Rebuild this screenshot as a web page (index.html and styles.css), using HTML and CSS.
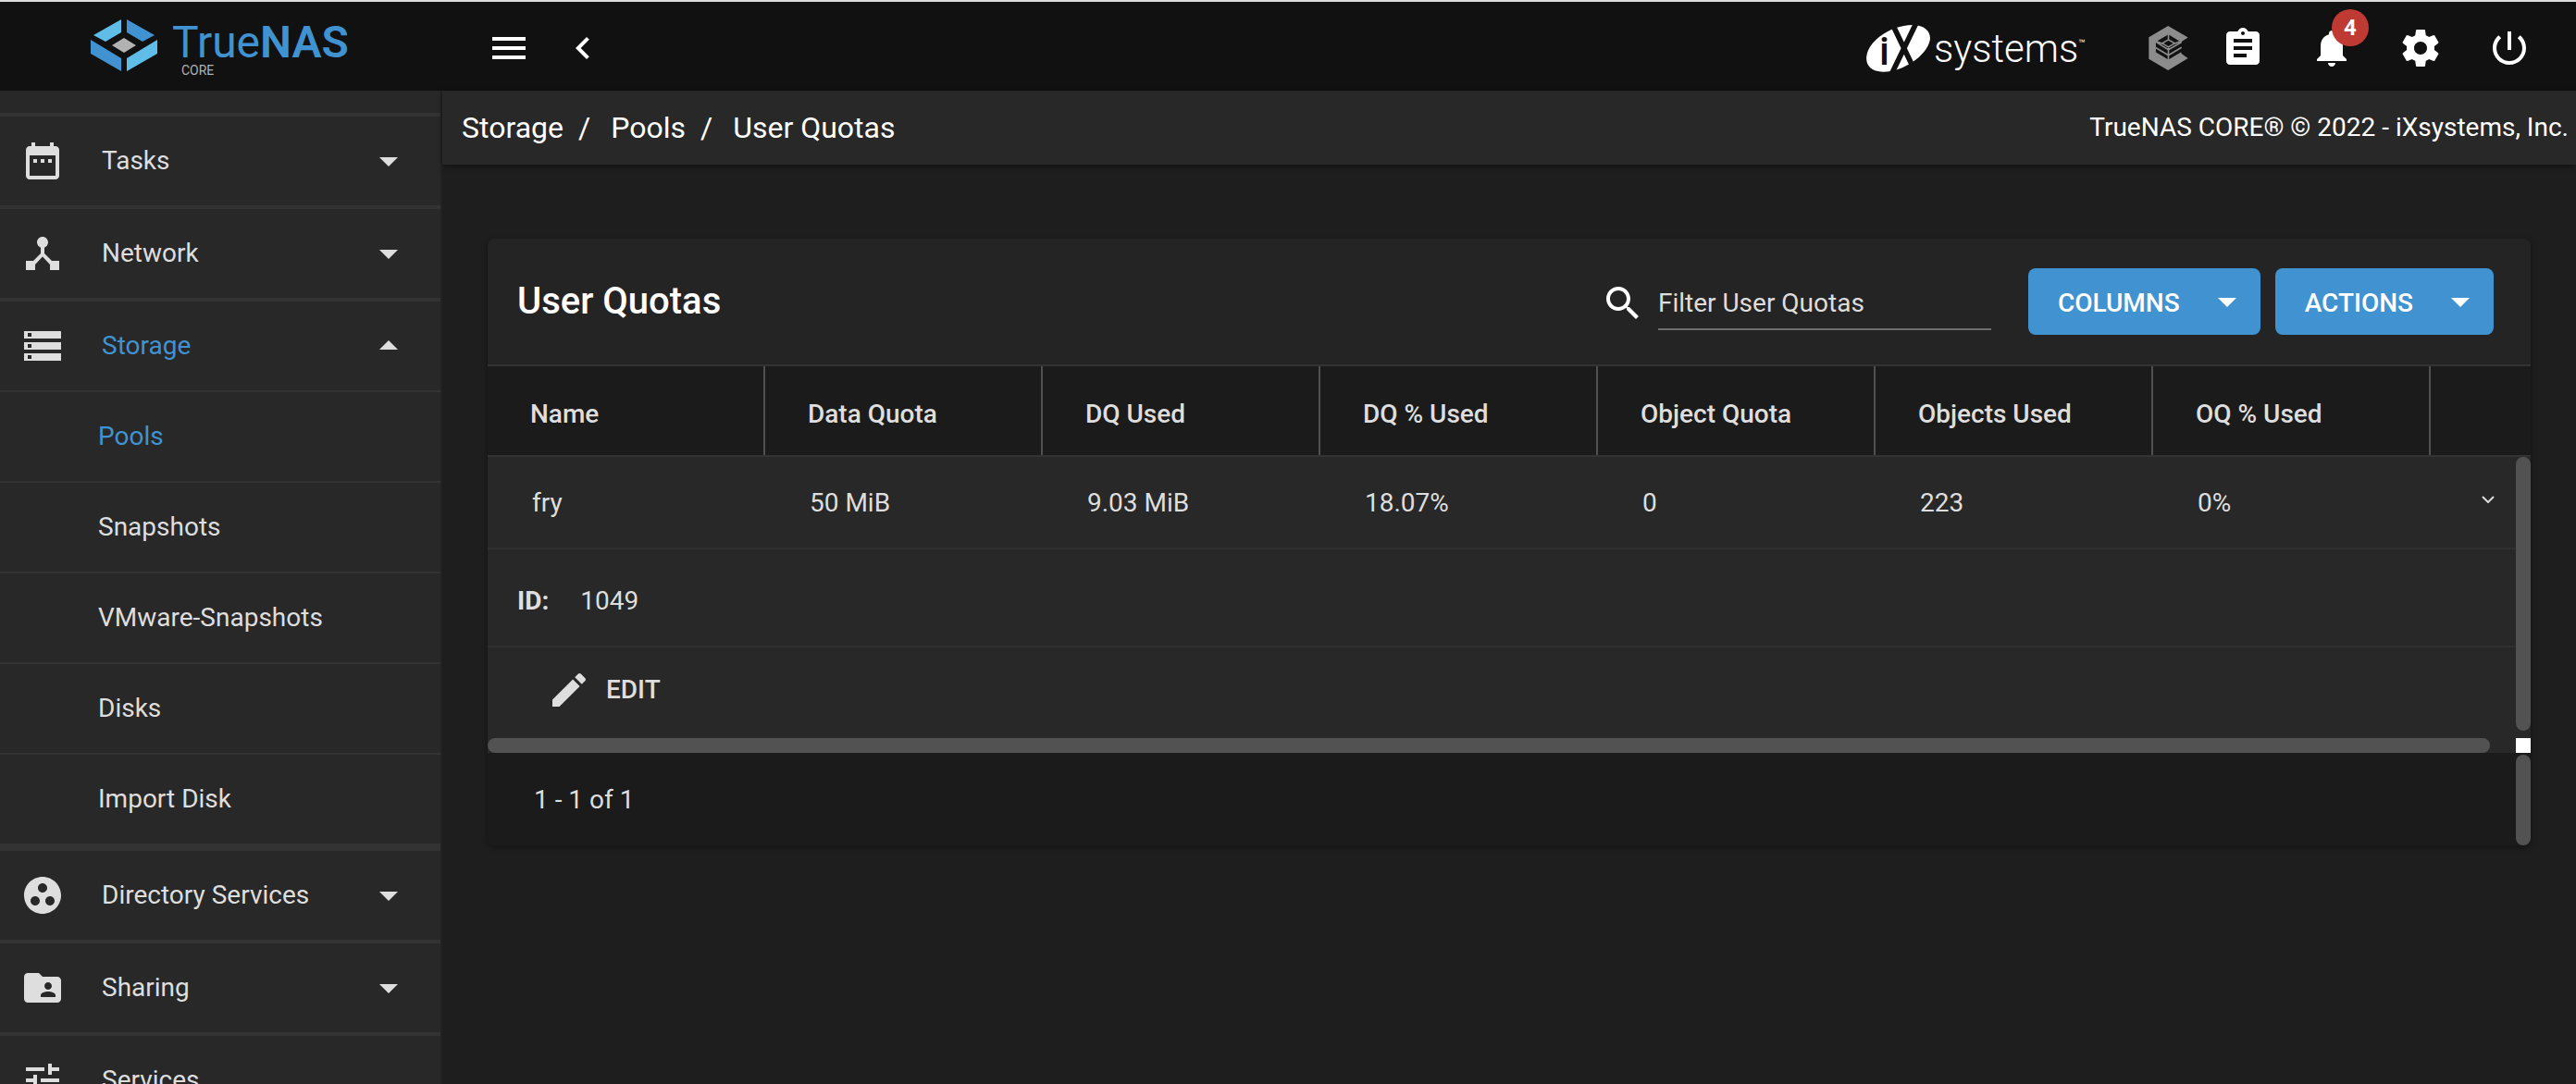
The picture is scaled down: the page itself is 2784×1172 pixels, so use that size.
FILE: index.html
```html
<!DOCTYPE html>
<html lang="en">
<head>
<meta charset="utf-8">
<title>TrueNAS - User Quotas</title>
<link rel="stylesheet" href="styles.css">
</head>
<body>
<svg class="defs" aria-hidden="true">
  <symbol id="caret-down" viewBox="0 0 24 24"><path d="M7 10l5 5 5-5z"/></symbol>
  <symbol id="caret-up" viewBox="0 0 24 24"><path d="M7 14l5-5 5 5z"/></symbol>
</svg>
<div class="app">
  <header class="topbar">
    <a class="brand" href="#" aria-label="TrueNAS CORE">
      <svg class="brand-mark" viewBox="0 0 72 58">
        <path fill="#5fbde8" d="M33 1v14L16 25 3 18zM72 23L39 43v14l33-19z"/>
        <path fill="#4093d0" d="M39 1l30 17-13 7-17-10zM0 23l33 20v14L0 38z"/>
        <path fill="#b2b2b2" d="M36 21l13 8-13 8-13-8z"/>
      </svg>
      <span class="brand-text">
        <span class="brand-name">True<b>NAS</b></span>
        <span class="brand-edition">CORE</span>
      </span>
    </a>
    <div class="toolbar">
      <button class="icon-btn" aria-label="Toggle menu"><svg viewBox="0 0 24 24"><path d="M3 18h18v-2H3v2zm0-5h18v-2H3v2zm0-7v2h18V6H3z"/></svg></button>
      <button class="icon-btn" aria-label="Collapse"><svg viewBox="0 0 24 24"><path d="M15.41 7.41L14 6l-6 6 6 6 1.41-1.41L10.83 12z"/></svg></button>
      <a class="vendor" href="#" aria-label="iXsystems">
        <svg class="vendor-mark" viewBox="51 57 207 153">
          <path fill="#fff" d="M200 57C246 57 262 84 257 108 245 158 170 210 104 209 58 208 45 178 54 148 68 100 138 57 200 57z"/>
          <path stroke="#111" stroke-width="17" fill="none" d="M136 55l66 138M213 50l-80 166"/>
          <text x="93" y="187" class="vendor-i">i</text>
        </svg>
        <span class="vendor-name">systems</span><span class="vendor-tm">™</span>
      </a>
      <button class="icon-btn command" aria-label="TrueCommand"><svg viewBox="66 68 130 145"><path fill="#8c8c8c" d="M130 68l65 38-23 15-41-25-41 24v43l41 25 41-25v-5l23 16-65 39-63-37v-71z"/><path fill="none" stroke="#8c8c8c" stroke-width="5" d="M131 92v24M131 140v50M131 113l20 12-20 12-20-12zM88 119l43 27 43-25M88 138l43 26 43-26M112 126l-22-8M150 126l22-8"/><path fill="none" stroke="#8c8c8c" stroke-width="9" d="M88 158l43 26 43-26"/></svg></button>
      <div class="actions">
        <button class="icon-btn" aria-label="Task manager"><svg viewBox="0 0 24 24"><path d="M19 3h-4.180C14.400 1.840 13.300 1 12 1c-1.300 0-2.400.840-2.820 2H5c-1.100 0-2 .9-2 2v14c0 1.100.9 2 2 2h14c1.100 0 2-.9 2-2V5c0-1.100-.9-2-2-2zm-7 0c.55 0 1 .45 1 1s-.45 1-1 1-1-.45-1-1 .45-1 1-1zm2 14H7v-2h7v2zm3-4H7v-2h10v2zm0-4H7V7h10v2z"/></svg></button>
        <button class="icon-btn" aria-label="Alerts"><svg viewBox="0 0 24 24"><path d="M12 22c1.100 0 2-.9 2-2h-4c0 1.100.890 2 2 2zm6-6v-5c0-3.070-1.640-5.640-4.500-6.320V4c0-.830-.670-1.500-1.500-1.500s-1.500.670-1.500 1.500v.680C7.630 5.360 6 7.920 6 11v5l-2 2v1h16v-1l-2-2z"/></svg><span class="badge">4</span></button>
        <button class="icon-btn" aria-label="Settings"><svg viewBox="0 0 24 24"><path d="M19.430 12.980c.04-.32.070-.64.070-.98s-.03-.66-.07-.98l2.110-1.650c.19-.15.24-.42.12-.64l-2-3.460c-.12-.22-.39-.3-.61-.22l-2.490 1c-.52-.4-1.080-.73-1.690-.98l-.38-2.650C14.460 2.180 14.250 2 14 2h-4c-.25 0-.46.18-.49.42l-.38 2.650c-.61.25-1.170.590-1.690.98l-2.490-1c-.23-.09-.49 0-.61.22l-2 3.460c-.13.22-.07.49.12.64l2.110 1.650c-.04.32-.07.650-.07.98s.03.66.07.98l-2.110 1.650c-.19.15-.24.42-.12.64l2 3.460c.12.22.39.3.61.22l2.490-1c.52.4 1.080.73 1.690.98l.38 2.650c.03.24.24.42.49.42h4c.25 0 .46-.18.49-.42l.38-2.650c.61-.25 1.170-.59 1.690-.98l2.490 1c.23.09.49 0 .61-.22l2-3.460c.12-.22.070-.49-.12-.64l-2.110-1.650zM12 15.500c-1.930 0-3.500-1.570-3.500-3.500s1.570-3.500 3.500-3.500 3.500 1.570 3.500 3.500-1.570 3.500-3.500 3.500z"/></svg></button>
        <button class="icon-btn" aria-label="Power"><svg viewBox="0 0 24 24"><path d="M13 3h-2v10h2V3zm4.830 2.170l-1.420 1.420C17.990 7.860 19 9.810 19 12c0 3.870-3.130 7-7 7s-7-3.130-7-7c0-2.190 1.010-4.140 2.580-5.420L6.170 5.170C4.230 6.820 3 9.260 3 12c0 4.970 4.030 9 9 9s9-4.030 9-9c0-2.740-1.230-5.180-3.170-6.830z"/></svg></button>
      </div>
    </div>
  </header>

  <nav class="sidebar">
    <button class="nav-item">
      <svg viewBox="0 0 24 24"><path d="M9 11H7v2h2v-2zm4 0h-2v2h2v-2zm4 0h-2v2h2v-2zm2-7h-1V2h-2v2H8V2H6v2H5c-1.110 0-1.990.9-1.990 2L3 20c0 1.100.890 2 2 2h14c1.100 0 2-.9 2-2V6c0-1.100-.9-2-2-2zm0 16H5V9h14v11z"/></svg>
      <span>Tasks</span><svg><use href="#caret-down"/></svg>
    </button>
    <button class="nav-item">
      <svg viewBox="0 0 24 24"><path d="M17 16l-4-4V8.820C14.160 8.400 15 7.300 15 6c0-1.660-1.340-3-3-3S9 4.340 9 6c0 1.300.840 2.400 2 2.820V12l-4 4H3v5h5v-3.050l4-4.200 4 4.200V21h5v-5h-4z"/></svg>
      <span>Network</span><svg><use href="#caret-down"/></svg>
    </button>
    <button class="nav-item open">
      <svg viewBox="0 0 24 24"><path d="M2 20h20v-4H2v4zm2-3h2v2H4v-2zM2 4v4h20V4H2zm4 3H4V5h2v2zm-4 7h20v-4H2v4zm2-3h2v2H4v-2z"/></svg>
      <span>Storage</span><svg><use href="#caret-up"/></svg>
    </button>
    <div class="sub">
      <a class="current" href="#">Pools</a>
      <a href="#">Snapshots</a>
      <a href="#">VMware-Snapshots</a>
      <a href="#">Disks</a>
      <a href="#">Import Disk</a>
    </div>
    <button class="nav-item">
      <svg viewBox="0 0 24 24"><path d="M12 2C6.480 2 2 6.480 2 12s4.480 10 10 10 10-4.480 10-10S17.520 2 12 2zM8 17.500c-1.380 0-2.500-1.120-2.500-2.500s1.120-2.500 2.500-2.500 2.500 1.120 2.500 2.500-1.120 2.500-2.500 2.500zM9.500 8c0-1.380 1.120-2.500 2.500-2.500s2.500 1.120 2.500 2.500-1.120 2.500-2.500 2.500S9.500 9.380 9.500 8zm6.500 9.500c-1.380 0-2.500-1.120-2.500-2.500s1.120-2.500 2.500-2.500 2.500 1.120 2.500 2.500-1.120 2.500-2.500 2.500z"/></svg>
      <span>Directory Services</span><svg><use href="#caret-down"/></svg>
    </button>
    <button class="nav-item">
      <svg viewBox="0 0 24 24"><path d="M20 6h-8l-2-2H4c-1.100 0-1.990.9-1.990 2L2 18c0 1.100.9 2 2 2h16c1.100 0 2-.9 2-2V8c0-1.100-.9-2-2-2zm-5 3c1.100 0 2 .9 2 2s-.9 2-2 2-2-.9-2-2 .9-2 2-2zm4 8h-8v-1c0-1.330 2.670-2 4-2s4 .670 4 2v1z"/></svg>
      <span>Sharing</span><svg><use href="#caret-down"/></svg>
    </button>
    <button class="nav-item">
      <svg viewBox="0 0 24 24"><path d="M3 17v2h6v-2H3zM3 5v2h10V5H3zm10 16v-2h8v-2h-8v-2h-2v6h2zM7 9v2H3v2h4v2h2V9H7zm14 4v-2H11v2h10zm-6-4h2V7h4V5h-4V3h-2v6z"/></svg>
      <span>Services</span>
    </button>
  </nav>

  <main class="main">
    <div class="crumbs">
      <div class="trail">
        <a href="#">Storage</a><i>/</i><a href="#">Pools</a><i>/</i><a href="#">User Quotas</a>
      </div>
      <span class="copyright">TrueNAS CORE® © 2022 - iXsystems, Inc.</span>
    </div>

    <section class="card">
      <div class="card-head">
        <h1>User Quotas</h1>
        <label class="filter">
          <svg viewBox="0 0 24 24"><path d="M15.500 14h-.79l-.28-.27C15.410 12.590 16 11.110 16 9.500 16 5.910 13.090 3 9.500 3S3 5.910 3 9.500 5.910 16 9.500 16c1.610 0 3.090-.59 4.230-1.570l.27.28v.79l5 4.990L20.490 19l-4.990-5zm-6 0C7.010 14 5 11.990 5 9.500S7.010 5 9.500 5 14 7.010 14 9.500 11.990 14 9.500 14z"/></svg>
          <input type="text" placeholder="Filter User Quotas" aria-label="Filter User Quotas">
        </label>
        <button class="btn"><span>COLUMNS</span><svg><use href="#caret-down"/></svg></button>
        <button class="btn"><span>ACTIONS</span><svg><use href="#caret-down"/></svg></button>
      </div>

      <div class="grid">
        <table>
          <colgroup><col class="c"><col class="c"><col class="c"><col class="c"><col class="c"><col class="c"><col class="c"><col></colgroup>
          <thead>
            <tr><th>Name</th><th>Data Quota</th><th>DQ Used</th><th>DQ % Used</th><th>Object Quota</th><th>Objects Used</th><th>OQ % Used</th><th></th></tr>
          </thead>
          <tbody>
            <tr><td>fry</td><td>50 MiB</td><td>9.03 MiB</td><td>18.07%</td><td>0</td><td>223</td><td>0%</td>
              <td class="expand"><button aria-label="Collapse row"><svg viewBox="0 0 14 8"><path fill="none" stroke="#ddd" stroke-width="2" d="M1 1l6 6 6-6"/></svg></button></td></tr>
            <tr class="detail"><td colspan="8"><b>ID:</b><span>1049</span></td></tr>
            <tr class="edit"><td colspan="8"><button><svg viewBox="0 0 24 24"><path d="M3 17.250V21h3.750L17.810 9.940l-3.750-3.750L3 17.250zM20.710 7.040c.39-.39.39-1.020 0-1.410l-2.340-2.340c-.39-.39-1.020-.39-1.410 0l-1.830 1.830 3.750 3.750 1.830-1.830z"/></svg>EDIT</button></td></tr>
          </tbody>
        </table>
        <div class="vtrack"><div class="vthumb"></div></div>
        <div class="htrack"><div class="hthumb"></div><div class="corner"></div></div>
      </div>
      <div class="card-foot">
        <span>1 - 1 of 1</span>
        <div class="foot-track"></div>
      </div>
    </section>
  </main>
</div>
</body>
</html>
```

FILE: styles.css
```css
* { box-sizing: border-box; }

body {
  margin: 0;
  overflow: hidden;
  background: #1e1e1e;
  color: #dedede;
  font: 28px/36px Roboto, "Liberation Sans", sans-serif;
}

a { color: inherit; text-decoration: none; }

button {
  padding: 0;
  border: 0;
  background: none;
  color: inherit;
  font: inherit;
  text-align: left;
}

svg { display: block; fill: currentColor; flex: none; }
.defs { display: none; }

.app {
  display: grid;
  grid-template: 98px minmax(0, 1fr) / 478px minmax(0, 1fr);
  height: 100vh;
}

/* Top bar */
.topbar {
  grid-column: 1 / -1;
  display: grid;
  grid-template-columns: subgrid;
  border-top: 2px solid #dcdcde;
  background: #111;
  color: #fff;
}

.brand { display: flex; gap: 16px; padding: 18px 0 0 98px; }
.brand-mark { width: 72px; height: 58px; }
.brand-text { display: flex; flex-direction: column; }
.brand-name { color: #4093d0; font-size: 48px; line-height: 52px; }
.brand-name b { font-weight: 600; }
.brand-edition { padding-left: 10px; color: #b2b2b2; font-size: 14px; line-height: 8px; }

.toolbar { display: flex; align-items: center; padding: 4px 48px 0; gap: 32px; }
.icon-btn { position: relative; width: 48px; height: 48px; }
.icon-btn svg { width: 48px; height: 48px; }
.icon-btn.command svg { width: 43px; margin-left: 2px; }
.actions { display: flex; gap: 48px; }

.vendor { display: flex; align-items: center; width: 271px; margin-left: auto; }
.vendor-mark { width: 69px; height: 51px; overflow: visible; }
.vendor-i { font: 500 128px Roboto, sans-serif; fill: #111; }
.vendor-name { padding: 2px 0 0 4px; font-size: 42px; line-height: 48px; font-weight: 300; }
.vendor-tm { align-self: flex-start; font-size: 12px; line-height: 40px; }

.badge {
  position: absolute;
  top: -18px;
  left: 24px;
  width: 40px;
  height: 40px;
  border-radius: 50%;
  background: #c03a34;
  font-size: 24px;
  line-height: 40px;
  font-weight: 700;
  text-align: center;
}

/* Sidebar */
.sidebar {
  overflow: hidden;
  padding-top: 24px;
  background: #282828;
  border-right: 2px solid #222;
}

.nav-item {
  display: flex;
  align-items: center;
  gap: 40px;
  width: 100%;
  height: 100px;
  padding: 0 32px 0 22px;
  border-top: 4px solid #333;
}

.nav-item svg { width: 48px; height: 48px; }
.nav-item span { flex: 1; }
.nav-item.open span, .sub .current { color: #4093d0; }
.sub { border-bottom: 4px solid #333; }
.sub a {
  display: flex;
  align-items: center;
  height: 98px;
  padding-left: 106px;
  border-top: 2px solid #333;
}

/* Page */
.crumbs {
  display: flex;
  align-items: center;
  justify-content: space-between;
  height: 80px;
  padding: 0 8px 0 21px;
  background: #282828;
  color: #fff;
  box-shadow: 0 2px 6px rgba(0, 0, 0, .4);
}

.trail { display: flex; font-size: 32px; }
.trail i { padding: 0 22px 0 16px; font-style: normal; }

.card {
  margin: 80px 49px 0;
  border-radius: 8px;
  background: #242424;
  box-shadow: 0 2px 6px rgba(0, 0, 0, .4);
}

.card-head {
  display: flex;
  align-items: center;
  height: 136px;
  padding: 0 40px 0 32px;
}

h1 { flex: 1; margin: 0; color: #fff; font-size: 40px; line-height: 48px; font-weight: 500; }

.filter { display: flex; align-items: center; gap: 14px; margin-right: 40px; color: #fff; }
.filter svg { width: 48px; height: 52px; padding-top: 4px; }
.filter input {
  width: 360px;
  height: 62px;
  padding: 4px 0 0;
  border: 0;
  border-bottom: 2px solid #6e6e6e;
  background: none;
  color: #dedede;
  font: inherit;
}
.filter input::placeholder { color: #dedede; opacity: 1; }

.btn {
  display: flex;
  align-items: center;
  gap: 27px;
  height: 72px;
  padding: 0 12px 0 32px;
  border-radius: 8px;
  background: #4093d0;
  color: #fff;
  font-weight: 500;
}
.btn + .btn { margin-left: 16px; }
.btn span { padding-top: 4px; }
.btn svg { width: 48px; height: 48px; }

/* Table */
.grid { position: relative; background: #282828; }
table { width: 100%; table-layout: fixed; border-collapse: separate; border-spacing: 0; }
.c { width: 300px; }

th {
  height: 100px;
  padding: 8px 0 0 46px;
  border: solid #333;
  border-width: 2px 0;
  background: #1b1b1b;
  font-weight: 500;
  text-align: left;
  background-image: linear-gradient(#505050, #505050);
  background-repeat: no-repeat;
  background-position: right;
  background-size: 2px 100%;
}
th:last-child { background-image: none; }

td { height: 100px; padding: 2px 0 0 48px; border-bottom: 2px solid #303030; }
.expand button { display: block; margin: 0 0 8px 7px; }
.expand svg { width: 14px; height: 8px; }
.detail td { height: 106px; padding: 8px 0 0 32px; }
.detail b { font-weight: 700; margin-right: 34px; }
.edit td { height: 98px; padding: 0 0 6px 64px; border: 0; }
.edit button { display: flex; align-items: center; gap: 16px; font-weight: 500; }
.edit svg { width: 48px; height: 48px; }

.vtrack {
  position: absolute;
  top: 100px;
  right: 0;
  bottom: 16px;
  width: 16px;
  padding-bottom: 8px;
  background: #282828;
}
.vthumb { height: 100%; border-radius: 8px; background: #525252; }
.htrack { display: flex; justify-content: space-between; height: 16px; }
.hthumb { width: 98%; border-radius: 8px; background: #525252; }
.corner { width: 16px; background: #fff; }

.card-foot {
  display: flex;
  align-items: center;
  justify-content: space-between;
  height: 100px;
  padding: 2px 0 0 50px;
  background: #1b1b1b;
  border-radius: 0 0 8px 8px;
}
.foot-track { align-self: stretch; width: 16px; border-radius: 8px; background: #525252; }
```
